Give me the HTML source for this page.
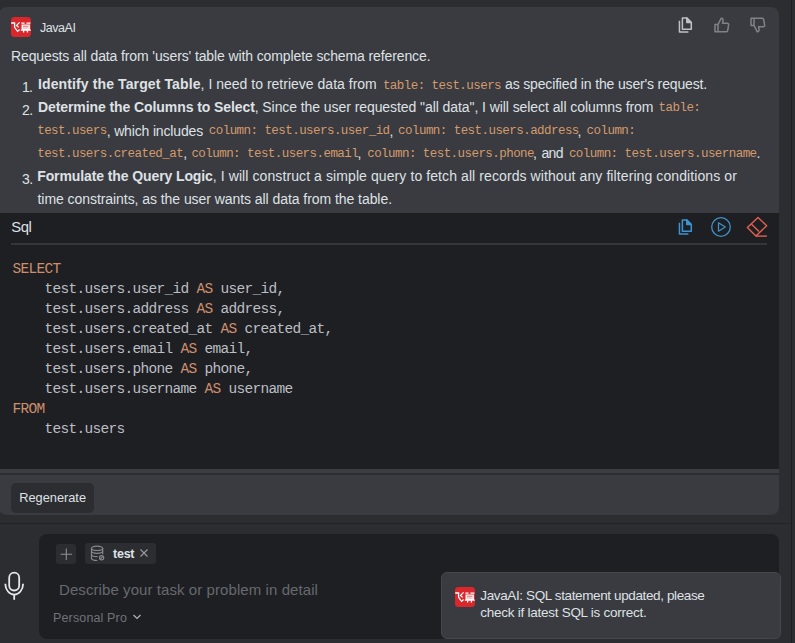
<!DOCTYPE html>
<html><head><meta charset="utf-8">
<style>
html,body{margin:0;padding:0;}
body{width:795px;height:643px;overflow:hidden;background:#2b2d30;position:relative;font-family:"Liberation Sans",sans-serif;}
.abs{position:absolute;}
.t{position:absolute;white-space:pre;line-height:20px;font-family:"Liberation Sans",sans-serif;}
.b{font-weight:bold;}
.m{position:absolute;white-space:pre;line-height:20px;font-family:"Liberation Mono",monospace;}
.cl{position:absolute;left:12.5px;white-space:pre;line-height:20px;font-family:"Liberation Mono",monospace;font-size:14.5px;letter-spacing:-0.7px;color:#bcbec4;}
.cl i{font-style:normal;color:#cf8e6d;}
#card{left:-1px;top:7px;width:780px;height:508px;background:#393b40;border-radius:8px;}
#code{left:0;top:213px;width:779px;height:256px;background:#1e1f22;}
#hbar{left:0;top:469px;width:779px;height:4px;background:#3b3d42;}
#hline{left:0;top:473px;width:779px;height:2px;background:#2c2e31;}
#divider{left:11px;top:243px;width:756px;height:2px;background:#34363a;}
#sep{left:0;top:523px;width:791px;height:1px;background:#232427;}
#vline{left:791px;top:0;width:1px;height:643px;background:#1e1f22;}
#regen{left:11px;top:483px;width:83px;height:30px;background:#2b2d30;border-radius:5px;}
#input{left:39px;top:534px;width:740px;height:105px;background:#1e1f22;border-radius:8px;}
#plus{left:56px;top:544px;width:20px;height:20px;background:#2b2d30;border-radius:3px;}
#tag{left:85px;top:543px;width:71px;height:21px;background:#2b2d30;border-radius:3px;}
#popup{left:441px;top:572px;width:338px;height:65px;background:#393b40;border:1px solid #45474c;border-radius:6px;}
svg{position:absolute;overflow:visible;}
</style></head><body>
<div id="card" class="abs"></div>
<div id="code" class="abs"></div>
<div id="hbar" class="abs"></div>
<div id="hline" class="abs"></div>
<div id="divider" class="abs"></div>
<div id="sep" class="abs"></div>
<div id="vline" class="abs"></div>
<div id="regen" class="abs"></div>
<div id="input" class="abs"></div>
<div id="plus" class="abs"></div>
<div id="tag" class="abs"></div>
<div id="popup" class="abs"></div>

<!-- logo -->
<svg style="left:11px;top:17px" width="20" height="20" viewBox="0 0 20 20">
<rect x="0" y="0" width="20" height="20" rx="3.5" fill="#d9272c"/>
<g fill="none" stroke="#fff" stroke-width="1.3">
<path d="M0.2 6H3.6V10.3L6.6 14.4L8.6 12.6"/><path d="M8.6 5.4L5.6 8.4L7.6 10.4"/>
<path d="M10.4 6.2H13.6M15.4 6.2H19.4M11.2 8.2H18.2V12H11.2Z M11.2 10.1H18.2 M9.8 13.2H19.8M12.6 13V15.6M16.4 13V15.6"/>
</g></svg>
<svg style="left:455px;top:587px" width="20" height="20" viewBox="0 0 20 20">
<rect x="0" y="0" width="20" height="20" rx="3.5" fill="#d9272c"/>
<g fill="none" stroke="#fff" stroke-width="1.3">
<path d="M0.2 6H3.6V10.3L6.6 14.4L8.6 12.6"/><path d="M8.6 5.4L5.6 8.4L7.6 10.4"/>
<path d="M10.4 6.2H13.6M15.4 6.2H19.4M11.2 8.2H18.2V12H11.2Z M11.2 10.1H18.2 M9.8 13.2H19.8M12.6 13V15.6M16.4 13V15.6"/>
</g></svg>

<!-- top icons: copy, thumbs up, thumbs down -->
<svg style="left:678px;top:16px" width="16" height="18" viewBox="0 0 16 18">
<g fill="none" stroke="#bfc1c5" color="#bfc1c5" stroke-width="1.5" stroke-linejoin="round">
<path d="M1.45 4.7V16H10.4"/><path d="M4.4 1.9H8.8L13.3 6.6V13.2H4.4Z"/><path d="M8.8 1.9V6.6H13.3Z" fill="currentColor"/>
</g></svg>
<svg style="left:713.5px;top:17px" width="17" height="17" viewBox="0 0 17 17">
<g fill="none" stroke="#808287" stroke-width="1.5" stroke-linejoin="round">
<path d="M1 7.5H4V14.8H1Z"/><path d="M4 7.5L7.3 1.2C8.8 1.2 9.3 2.5 9 4L8.5 6.3H13.3C14.3 6.3 14.8 7 14.6 8L13.6 13.8C13.4 14.5 13 14.8 12.3 14.8H4"/>
</g></svg>
<svg style="left:749.5px;top:17px" width="17" height="17" viewBox="0 0 17 17">
<g fill="none" stroke="#808287" stroke-width="1.5" stroke-linejoin="round">
<path d="M1 1.2H4V8.5H1Z"/><path d="M4 8.5L7.3 14.8C8.8 14.8 9.3 13.5 9 12L8.5 9.7H13.3C14.3 9.7 14.8 9 14.6 8L13.6 2.2C13.4 1.5 13 1.2 12.3 1.2H4"/>
</g></svg>

<!-- code header icons -->
<svg style="left:678px;top:218px" width="16" height="18" viewBox="0 0 16 18">
<g fill="none" stroke="#3c95d2" color="#3c95d2" stroke-width="1.5" stroke-linejoin="round">
<path d="M1.45 4.7V16H10.4"/><path d="M4.4 1.9H8.8L13.3 6.6V13.2H4.4Z"/><path d="M8.8 1.9V6.6H13.3Z" fill="currentColor"/>
</g></svg>
<svg style="left:710px;top:216px" width="22" height="22" viewBox="0 0 22 22">
<g fill="none" stroke="#3f90c8" stroke-width="1.3" stroke-linejoin="round">
<circle cx="11" cy="11" r="9.3"/><path d="M8.5 6.8V15.2L15.3 11Z"/>
</g></svg>
<svg style="left:746px;top:216px" width="22" height="22" viewBox="0 0 22 22">
<g fill="none" stroke="#e5604f" stroke-width="1.4" stroke-linejoin="round">
<path d="M12 1.4L20.7 9.7L9.9 19.9L1.4 11.6Z"/><path d="M5.3 7.9L13 15.4"/><path d="M9.9 20.1H20.9"/>
</g></svg>

<!-- plus -->
<svg style="left:56px;top:544px" width="20" height="20" viewBox="0 0 20 20">
<path d="M10.3 4.5V16M4.6 10.3H16" stroke="#8c8f94" stroke-width="1.1"/>
</svg>
<!-- database icon -->
<svg style="left:90px;top:544px" width="16" height="18" viewBox="0 0 16 18">
<g fill="none" stroke="#85888d" stroke-width="1.2">
<ellipse cx="7.1" cy="4.3" rx="5.6" ry="2.2"/><path d="M1.5 4.3V14.3C1.5 15.5 4 16.5 7.3 16.5"/><path d="M12.7 4.3V10.2"/>
<path d="M1.5 7.1C1.5 8.3 4 9.3 7.1 9.3S12.7 8.3 12.7 7.1"/><path d="M1.5 10.5C1.5 11.7 4 12.7 7.5 12.7"/>
<circle cx="11.6" cy="13.7" r="2.1"/><path d="M10.5 14.8L12.7 12.6"/>
</g></svg>
<!-- x -->
<svg style="left:139px;top:548px" width="10" height="10" viewBox="0 0 10 10">
<path d="M1.5 1.5L8.5 8.5M8.5 1.5L1.5 8.5" stroke="#9a9da2" stroke-width="1.1"/>
</svg>
<!-- mic -->
<svg style="left:3px;top:571px" width="22" height="30" viewBox="0 0 22 30">
<g fill="none" stroke="#e6e7ea" stroke-width="1.8">
<rect x="6.2" y="1.7" width="10" height="17.8" rx="5"/><path d="M2.3 12.7C2.3 19 6.5 23.6 11.2 23.6S20.1 19 20.1 12.7"/><path d="M11.2 23.6V28.8"/>
</g></svg>
<!-- chevron -->
<svg style="left:132px;top:613px" width="10" height="8" viewBox="0 0 10 8">
<path d="M1.5 2L5 5.5L8.5 2" fill="none" stroke="#b0b3b8" stroke-width="1.2"/>
</svg>

<span class="t" style="left:40.0px;top:17.57px;font-size:12.5px;letter-spacing:-0.452px;color:#dfe1e5">JavaAI</span>
<span class="t" style="left:11.0px;top:45.75px;font-size:14px;letter-spacing:-0.113px;color:#dfe1e5">Requests all data from 'users' table with complete schema reference.</span>
<span class="t" style="left:22.0px;top:77.15px;font-size:14px;letter-spacing:-0.838px;color:#dfe1e5">1.</span>
<span class="t b" style="left:38.0px;top:74.15px;font-size:14px;letter-spacing:0.115px;color:#dfe1e5">Identify the Target Table</span>
<span class="t" style="left:200.6px;top:74.15px;font-size:14px;letter-spacing:0.011px;color:#dfe1e5">, I need to retrieve data from</span>
<span class="m" style="left:382.9px;top:75.67px;font-size:12.5px;letter-spacing:-0.550px;color:#d49a6c">table: test.users</span>
<span class="t" style="left:505.0px;top:74.15px;font-size:14px;letter-spacing:-0.153px;color:#dfe1e5">as specified in the user's request.</span>
<span class="t" style="left:22.0px;top:100.15px;font-size:14px;letter-spacing:-0.588px;color:#dfe1e5">2.</span>
<span class="t b" style="left:38.0px;top:96.75px;font-size:14px;letter-spacing:-0.086px;color:#dfe1e5">Determine the Columns to Select</span>
<span class="t" style="left:254.7px;top:96.75px;font-size:14px;letter-spacing:-0.072px;color:#dfe1e5">, Since the user requested "all data", I will select all columns from</span>
<span class="m" style="left:658.6px;top:98.27px;font-size:12.5px;letter-spacing:-0.550px;color:#d49a6c">table:</span>
<span class="m" style="left:37.2px;top:120.97px;font-size:12.5px;letter-spacing:-0.550px;color:#d49a6c">test.users</span>
<span class="t" style="left:106.7px;top:120.65px;font-size:14px;letter-spacing:-0.158px;color:#dfe1e5">, which includes</span>
<span class="m" style="left:208.8px;top:120.97px;font-size:12.5px;letter-spacing:-0.550px;color:#d49a6c">column: test.users.user_id</span>
<span class="t" style="left:389.4px;top:120.65px;font-size:14px;letter-spacing:0.000px;color:#dfe1e5">,</span>
<span class="m" style="left:398.1px;top:120.97px;font-size:12.5px;letter-spacing:-0.550px;color:#d49a6c">column: test.users.address</span>
<span class="t" style="left:577.6px;top:120.65px;font-size:14px;letter-spacing:0.000px;color:#dfe1e5">,</span>
<span class="m" style="left:586.6px;top:120.97px;font-size:12.5px;letter-spacing:-0.550px;color:#d49a6c">column:</span>
<span class="m" style="left:37.2px;top:144.37px;font-size:12.5px;letter-spacing:-0.550px;color:#d49a6c">test.users.created_at</span>
<span class="t" style="left:183.3px;top:143.05px;font-size:14px;letter-spacing:0.000px;color:#dfe1e5">,</span>
<span class="m" style="left:191.4px;top:144.37px;font-size:12.5px;letter-spacing:-0.550px;color:#d49a6c">column: test.users.email</span>
<span class="t" style="left:357.6px;top:143.05px;font-size:14px;letter-spacing:0.000px;color:#dfe1e5">,</span>
<span class="m" style="left:367.2px;top:144.37px;font-size:12.5px;letter-spacing:-0.550px;color:#d49a6c">column: test.users.phone</span>
<span class="t" style="left:533.0px;top:143.05px;font-size:14px;letter-spacing:0.000px;color:#dfe1e5">,</span>
<span class="t" style="left:541.4px;top:143.05px;font-size:14px;letter-spacing:-0.553px;color:#dfe1e5">and</span>
<span class="m" style="left:568.9px;top:144.37px;font-size:12.5px;letter-spacing:-0.550px;color:#d49a6c">column: test.users.username</span>
<span class="t" style="left:756.6px;top:143.05px;font-size:14px;letter-spacing:0.000px;color:#dfe1e5">.</span>
<span class="t" style="left:22.0px;top:169.15px;font-size:14px;letter-spacing:-0.588px;color:#dfe1e5">3.</span>
<span class="t b" style="left:37.2px;top:165.85px;font-size:14px;letter-spacing:-0.102px;color:#dfe1e5">Formulate the Query Logic</span>
<span class="t" style="left:212.8px;top:165.85px;font-size:14px;letter-spacing:0.091px;color:#dfe1e5">, I will construct a simple query to fetch all records without any filtering conditions or</span>
<span class="t" style="left:37.5px;top:189.45px;font-size:14px;letter-spacing:-0.058px;color:#dfe1e5">time constraints, as the user wants all data from the table.</span>
<span class="t" style="left:11.2px;top:216.87px;font-size:14.8px;letter-spacing:-0.362px;color:#dfe1e5">Sql</span>
<span class="t" style="left:19.3px;top:487.56px;font-size:12.8px;letter-spacing:-0.018px;color:#dfe1e5">Regenerate</span>
<span class="t b" style="left:113.0px;top:543.67px;font-size:12.5px;letter-spacing:-0.232px;color:#dfe1e5">test</span>
<span class="t" style="left:59.0px;top:579.90px;font-size:15px;letter-spacing:0.078px;color:#66696f">Describe your task or problem in detail</span>
<span class="t" style="left:53.0px;top:608.17px;font-size:12.5px;letter-spacing:0.145px;color:#6f737a">Personal Pro</span>
<span class="t" style="left:480.3px;top:585.82px;font-size:13.5px;letter-spacing:-0.377px;color:#dfe1e5">JavaAI: SQL statement updated, please</span>
<span class="t" style="left:480.3px;top:602.62px;font-size:13.5px;letter-spacing:-0.262px;color:#dfe1e5">check if latest SQL is correct.</span>
<div class="cl" style="top:258.74px"><i>SELECT</i></div>
<div class="cl" style="top:278.74px">    test.users.user_id <i>AS</i> user_id,</div>
<div class="cl" style="top:298.74px">    test.users.address <i>AS</i> address,</div>
<div class="cl" style="top:318.74px">    test.users.created_at <i>AS</i> created_at,</div>
<div class="cl" style="top:338.74px">    test.users.email <i>AS</i> email,</div>
<div class="cl" style="top:358.74px">    test.users.phone <i>AS</i> phone,</div>
<div class="cl" style="top:378.74px">    test.users.username <i>AS</i> username</div>
<div class="cl" style="top:398.74px"><i>FROM</i></div>
<div class="cl" style="top:418.74px">    test.users</div>
</body></html>
